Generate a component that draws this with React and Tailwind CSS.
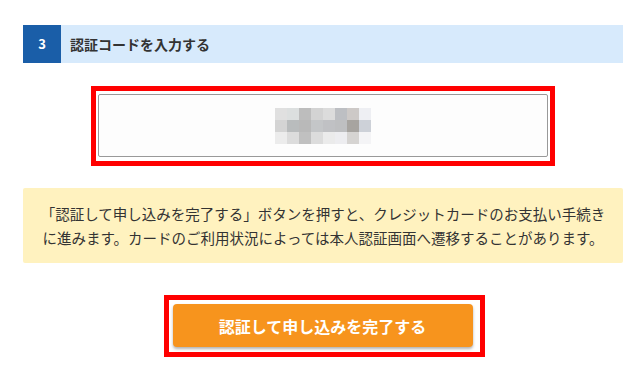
const mosaic = [
  ['#e0e0e0', '#dcdfdf', '#bdbdbd', '#d3d3d3', '#dcdcdc', '#bdbfc3', '#cdc9c7', '#eeeff3'],
  ['#d4d4d4', '#b9bcbd', '#b9b9b9', '#c4c6c8', '#c0c1c4', '#bebfc1', '#a7a4a0', '#cdd1d8'],
  ['#ececec', '#dcdcdc', '#c0c0c0', '#dcdcdc', '#ebebeb', '#ededf0', '#d6d4d2', '#f4f4f6'],
]

export default function App() {
  return (
    <div
      className="h-[366px] w-[640px] overflow-hidden bg-white text-[#333]"
      style={{ fontFamily: '"Noto Sans CJK JP", "Noto Sans", sans-serif' }}
    >
      <div className="ml-[23px] w-[600px] pt-[25px]">
        <div className="flex h-[38px] items-center bg-[#d7eafc]">
          <div className="flex h-full w-[38px] items-center justify-center bg-[#1a5ea8] text-[13px] font-bold text-white">
            3
          </div>
          <span className="ml-[9px] text-[14px] font-bold leading-none">認証コードを入力する</span>
        </div>

        <div className="mt-[23px] flex justify-center">
          <div className="h-[80px] w-[464px] border-[5px] border-[#ff0000] px-[2px] py-[3px]">
            <div className="flex h-[63px] items-center justify-center rounded-[2px] border border-[#999] bg-[#fdfdfd]">
              <div className="flex flex-col">
                {mosaic.map((row, i) => (
                  <div key={i} className="flex">
                    {row.map((c, j) => (
                      <div key={j} className="h-[12px] w-[12px]" style={{ backgroundColor: c }} />
                    ))}
                  </div>
                ))}
              </div>
            </div>
          </div>
        </div>

        <div className="mt-[22px] flex h-[75px] items-center justify-center rounded-[2px] bg-[#fff2bf] text-center text-[14.5px] leading-[24px]">
          <p>
            「認証して申し込みを完了する」ボタンを押すと、クレジットカードのお支払い手続き
            <br />
            に進みます。カードのご利用状況によっては本人認証画面へ遷移することがあります。
          </p>
        </div>

        <div className="mt-[32px] flex justify-center">
          <div className="ml-[2px] w-[321px] border-[5px] border-[#ff0000] pb-[5px] pl-[4px] pr-[7px] pt-[4px]">
            <button className="flex h-[43px] w-[300px] items-center justify-center rounded-[4px] bg-[#f7941d] text-[16px] font-bold text-white shadow-[0_2px_3px_rgba(0,0,0,0.3)]">
              認証して申し込みを完了する
            </button>
          </div>
        </div>
      </div>
    </div>
  )
}
